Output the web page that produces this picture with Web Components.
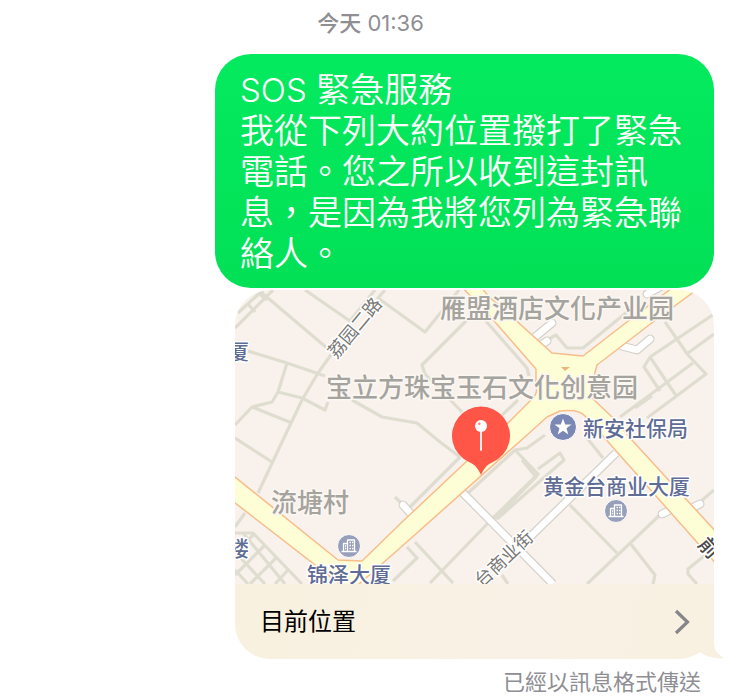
<!DOCTYPE html>
<html lang="zh-Hant">
<head>
<meta charset="utf-8">
<meta name="viewport" content="width=device-width, initial-scale=1">
<title>訊息</title>
<style>
body { margin: 0; background: #fff; font-family: Inter, "Noto Sans CJK TC", sans-serif; }
</style>
</head>
<body>
<message-thread>
  <time-stamp slot="time"><strong>今天</strong> 01:36</time-stamp>
  <text-bubble><span>SOS</span> 緊急服務<br>我從下列大約位置撥打了緊急電話。您之所以收到這封訊息，是因為我將您列為緊急聯絡人。</text-bubble>
  <location-card>目前位置</location-card>
  <delivery-note>已經以訊息格式傳送</delivery-note>
</message-thread>

<template id="thread-t">
<style>
:host { display: block; }
main { display: flex; flex-direction: column; gap: 2px; padding: 0 31px 0 215px; }
header { padding: 8px 4px 16px 0; text-align: center; }
</style>
<header><slot name="time"></slot></header>
<main><slot></slot></main>
</template>

<template id="time-t">
<style>
:host { display: block; font-size: 22px; line-height: 30px; color: #8e8e93; }
::slotted(strong) { font-weight: 500; }
</style>
<slot></slot>
</template>

<template id="bubble-t">
<style>
:host { display: block; box-sizing: border-box; padding: 15px 25px 14px; border-radius: 36px;
  background: linear-gradient(#04ea5e, #02e056); color: #fff; font-size: 34px; line-height: 41px; font-weight: 350; }
::slotted(span) { font-size: 33px; line-height: 1; font-weight: 300; }
</style>
<slot></slot>
</template>

<template id="note-t">
<style>
:host { display: block; padding: 6px 13px 0 0; text-align: right; font-size: 22px; line-height: 30px; color: #8e8e93; }
</style>
<slot></slot>
</template>

<template id="card-t">
<style>
:host { display: block; margin-left: 20px; }
a { display: block; position: relative; color: #000; text-decoration: none; }
.label { display: flex; align-items: center; justify-content: space-between; box-sizing: border-box; min-height: 75px;
  padding: 0 24px 0 25px; border-radius: 0 0 35px 35px; font-size: 24px; line-height: 36px;
  background: linear-gradient(100deg, #f8f1df, #f9f1e5 60%, #f8f0e0); }
.chevron { width: 16px; height: 28px; }
.tail { position: absolute; right: -10px; bottom: 0; width: 40px; height: 50px; }
</style>
<a href="#location">
  <area-map></area-map>
  <div class="label">
    <span><slot></slot></span>
    <svg class="chevron" viewBox="0 0 16 28" aria-hidden="true"><path d="M2 3 13.500 14 2 25" fill="none" stroke="#85858a" stroke-width="3.200"/></svg>
  </div>
  <svg class="tail" viewBox="0 0 40 50" aria-hidden="true"><path d="M10 10H30V33C30 41 33 45 40 49C31 50 22 48 16 43L4 30Z" fill="#f8f0e0"/></svg>
</a>
</template>

<template id="map-t">
<style>
:host { display: block; border-radius: 35px 35px 0 0; overflow: hidden; background: #f9f2ec; }
svg { display: block; width: 100%; aspect-ratio: 479 / 294; font-family: "Noto Sans CJK SC", sans-serif; }
path { stroke-linejoin: round; }
text { paint-order: stroke; stroke: #fbf7f2; stroke-width: 3px; stroke-linejoin: round; }
.lane { fill: none; stroke: #dfddd0; stroke-width: 3.200; }
.edge { fill: none; stroke: #d5d2cc; stroke-width: 9; }
.street { fill: none; stroke: #fff; stroke-width: 6.500; }
.round { stroke-linecap: round; }
.avenue { fill: #fdfdd6; stroke: #f8bd8a; stroke-width: 1.500; }
.area { font-size: 26px; fill: #a5a39e; font-weight: 500; }
.poi { font-size: 21px; fill: #5f6c95; font-weight: 500; stroke: #fff; }
.road { font-size: 18px; fill: #797876; stroke: #fff; text-anchor: middle; }
.major { font-size: 20px; fill: #494848; font-weight: 500; }
</style>
<svg viewBox="235 290 479 294" role="img" aria-label="地圖">
  <defs>
    <g id="office">
      <circle r="11.500" fill="#979fba" stroke="#fff" stroke-width="1"/>
      <path d="M-1.500 5V-6H5.500V5M-1.500-2.500H-5.500V5M-7.500 5.500H7.500" fill="none" stroke="#fff" stroke-width="1.300"/>
      <path d="M.5-3.500H2M3-3.500H4.500M.5-.500H2M3-.500H4.500M.5 2.500H2M3 2.500H4.500M-4 0H-2.800M-4 2.500H-2.800" stroke="#fff" stroke-width="1.400"/>
    </g>
  </defs>
  <g class="lane">
    <path d="M235 328 273 290M238 313 263 290M248 304 255 312M258 293 267 300M262 293 327 348M305 290 350 321 375 290M385 290 378 298 425 332 459 290"/>
    <path d="M333 352 318 373 302 400 283 440 258 493M245 513 235 527M248 351 287 363 325 376M287 363 278 392 272 402 252 407 235 425M278 392 302 398 325 410 328 402M252 407 292 423M235 438 272 462"/>
    <path d="M352 400 382 417 417 423 440 442 460 457 410 507M395 497 403 505M467 320 422 365 425 374 462 412M485 320 527 368 529 376M518 400 500 417"/>
    <path d="M545 341 556 335 567 348H583L627 312M665 322 688 355 706 374 647 418M650 357 714 314M688 353 714 334M650 357 644 367 660 391M650 357 677 397M693 363 620 417M635 408 652 396"/>
    <path d="M468 493 515 450 538 474 492 519 430 583M515 450 527 448 545 435M522 460 536 477 495 519M538 469 560 453 564 460 497 519M415 542 453 583M407 547 417 558 393 581M502 575 508 584"/>
    <path d="M587 438 603 458M570 505 617 553M587 584 663 512M630 543 655 575 653 584M697 584 688 574V569L714 548M700 502 714 490"/>
    <path d="M235 533H253L302 584M243 533 285 584M235 552 265 584M235 570 248 584M253 535 235 555M264 546 235 575M276 558 250 584M288 570 275 584"/>
  </g>
  <path class="edge" d="M462 492 553 584M530 537 616 453"/>
  <path class="street" d="M462 492 553 584M530 537 616 453"/>
  <path class="edge round" d="M403 505 412 515M535 337 552 323M541 345 547 341M622 346 637 350 650 339M662 514 672 509M690 509 700 504M647 294 660 287"/>
  <path class="street round" d="M403 505 412 515M535 337 552 323M541 345 547 341M622 346 637 350 650 339M662 514 672 509M690 509 700 504M647 294 660 287"/>
  <path class="avenue" d="M230 473 338 560 362 561 400 524 468 460 508 423 533 398Q538 393 536 386V369L495 322 463 288H482Q488 297 500 306L552 353 583 356 623 325 672 288H699L653 322 597 365 594 376 590 396 612 417 630 438 718 534V566L602 435 585 416Q579 409 560 411L547 417 527 435 400 548 350 592 230 499Z"/>
  <path d="M561 367H570L565 371Z" fill="#edb678"/>
  <text class="area" x="440" y="318">雁盟酒店文化产业园</text>
  <text class="area" x="326" y="397">宝立方珠宝玉石文化创意园</text>
  <text class="area" x="271" y="512">流塘村</text>
  <text class="poi" x="228" y="359">厦</text>
  <text class="poi" x="228" y="556">楼</text>
  <text class="poi" x="583" y="436">新安社保局</text>
  <text class="poi" x="543" y="494">黄金台商业大厦</text>
  <text class="poi" x="307" y="582">锦泽大厦</text>
  <text class="road" transform="translate(355 328) rotate(-50)" y="6">荔园二路</text>
  <text class="road" transform="translate(504 559) rotate(-43)" y="6">台商业街</text>
  <text class="road major" transform="translate(709 548) rotate(48)" y="7">前</text>
  <use href="#office" x="349" y="546"/>
  <use href="#office" x="616" y="511"/>
  <circle cx="563" cy="427" r="13.500" fill="#7b87b5" stroke="#fff"/>
  <path d="M563 418.500 565.200 424.500H571.500L566.500 428.300 568.300 434.500 563 430.800 557.700 434.500 559.500 428.300 554.500 424.500H560.800Z" fill="#fff"/>
  <path d="M481 475C478 469 476 465 469 462A29 29 0 1 1 493 462C486 465 484 469 481 475Z" fill="#ff5648"/>
  <path d="M481 430V450" stroke="#fff" stroke-width="1.800" stroke-linecap="round"/>
  <circle cx="481" cy="426" r="6" fill="#fff"/>
  <circle cx="479.300" cy="423.800" r="1.300" fill="#ff8b80"/>
</svg>
</template>

<script>
const define = (name, id) => customElements.define(name, class extends HTMLElement {
  constructor() {
    super();
    this.attachShadow({ mode: "open" }).append(document.getElementById(id).content.cloneNode(true));
  }
});
define("area-map", "map-t");
define("location-card", "card-t");
define("text-bubble", "bubble-t");
define("time-stamp", "time-t");
define("delivery-note", "note-t");
define("message-thread", "thread-t");
</script>
</body>
</html>
